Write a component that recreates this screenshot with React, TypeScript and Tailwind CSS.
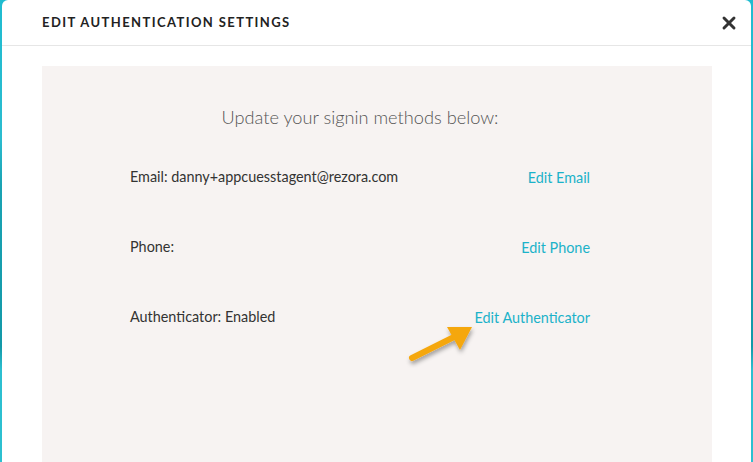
import { X } from 'lucide-react';

const rows = [
  { label: 'Email: danny+appcuesstagent@rezora.com', action: 'Edit Email' },
  { label: 'Phone:', action: 'Edit Phone' },
  { label: 'Authenticator: Enabled', action: 'Edit Authenticator' },
];

export default function App() {
  return (
    <div className="h-[462px] w-[753px] overflow-hidden bg-[linear-gradient(to_bottom,#1fbcd0_0%,#2bbccf_30%,#1aa3b3_40%,#1399a8_75%,#2cbfd0_80%,#2cc0d0_100%)] px-[2px] font-['Lato',sans-serif]">
      <div className="flex h-full flex-col rounded-t-[6px] bg-white">
        <div className="flex h-[46px] shrink-0 items-center justify-between border-b border-[#e6e6e6] pl-[40px] pr-[12px]">
          <h1 className="text-[13px] font-bold uppercase tracking-[1.4px] text-[#222]">
            Edit Authentication Settings
          </h1>
          <X className="h-[20px] w-[20px] text-[#333]" strokeWidth={3.5} />
        </div>

        <div className="flex-1 pl-[40px] pr-[39px] pt-[20px]">
          <div className="relative h-full w-[670px] bg-[#f7f3f2] pt-[38px]">
            <div className="w-[548px] pl-[88px]">
              <p className="text-center text-[18.2px] font-light text-[#555]">
                Update your signin methods below:
              </p>

              <div className="mt-[35px]">
                {rows.map((row) => (
                  <div key={row.action} className="flex h-[70px] items-start justify-between text-[14.4px]">
                    <span className="text-[#333]">{row.label}</span>
                    <span className="mt-[1px] text-[#1cb2c9]">{row.action}</span>
                  </div>
                ))}
              </div>
            </div>

            <svg
              className="absolute left-[362px] top-[252px]"
              width="80"
              height="60"
              viewBox="0 0 80 60"
            >
              <defs>
                <filter id="sh" x="-30%" y="-30%" width="160%" height="160%">
                  <feDropShadow dx="1" dy="3" stdDeviation="2" floodColor="#000" floodOpacity="0.35" />
                </filter>
              </defs>
              <g filter="url(#sh)">
                <line x1="8" y1="40" x2="50" y2="19" stroke="#f5a70f" strokeWidth="6" strokeLinecap="round" />
                <polygon points="68,9 43,9 56,32" fill="#f5a70f" />
              </g>
            </svg>
          </div>
        </div>
      </div>
    </div>
  );
}
